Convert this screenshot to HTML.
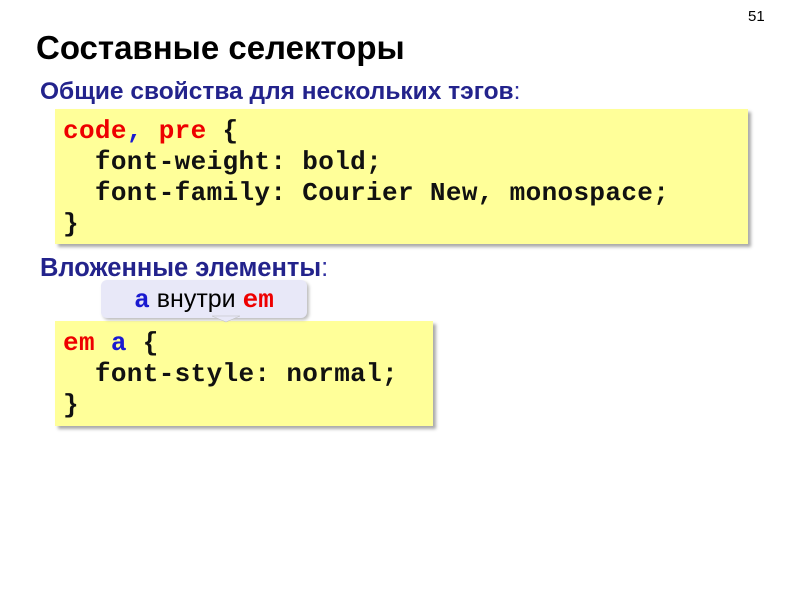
<!DOCTYPE html>
<html><head><meta charset="utf-8"><style>
body{margin:0;width:800px;height:600px;background:#fff;position:relative;overflow:hidden;font-family:"Liberation Sans",sans-serif}
.a{position:absolute;white-space:nowrap}
.num{left:748px;top:8px;font-size:15px}
.title{left:36px;top:29px;font-size:33px;font-weight:bold;color:#000}
.sub{font-size:24.5px;font-weight:bold;color:#23238c}
.sub span{font-weight:normal;color:#3030a0}
.box{position:absolute;background:#ffff99;box-shadow:3px 3px 3px #aaa}
pre{margin:0;font-family:"Liberation Mono",monospace;font-weight:bold;font-size:26px;letter-spacing:0.35px;line-height:31px;color:#111;position:absolute;left:8px}
.r{color:#e00}.b{color:#1a1ad0}
.bub{position:absolute;left:101px;top:280px;width:206px;height:38px;background:#e8e8f8;border-radius:6px;box-shadow:2px 2px 3px #bbb;font-size:25px;text-align:center;line-height:38px}
.bub .m{font-family:"Liberation Mono",monospace;font-weight:bold;font-size:26px}
</style></head><body>
<div class="a num">51</div>
<div class="a title">Составные селекторы</div>
<div class="a sub" style="left:40px;top:78px">Общие свойства для нескольких тэгов<span>:</span></div>
<div class="box" style="left:55px;top:109px;width:693px;height:135px">
<pre style="top:7px"><span class="r">code</span><span class="b">,</span> <span class="r">pre</span> {
  font-weight: bold;
  font-family: Courier New, monospace;
}</pre></div>
<div class="a sub" style="left:40px;top:254px;font-size:25.5px">Вложенные элементы<span>:</span></div>
<div class="box" style="left:55px;top:321px;width:378px;height:105px">
<pre style="top:7px"><span class="r">em</span> <span class="b">a</span> {
  font-style: normal;
}</pre></div>
<div class="bub"><span class="m b">a</span> внутри <span class="m r">em</span></div>
<svg class="a" style="left:0;top:0" width="800" height="600"><polygon points="212,316 240,316 226,322" fill="#e8e8f8" stroke="#bbb" stroke-width="0.5"/></svg>
</body></html>
